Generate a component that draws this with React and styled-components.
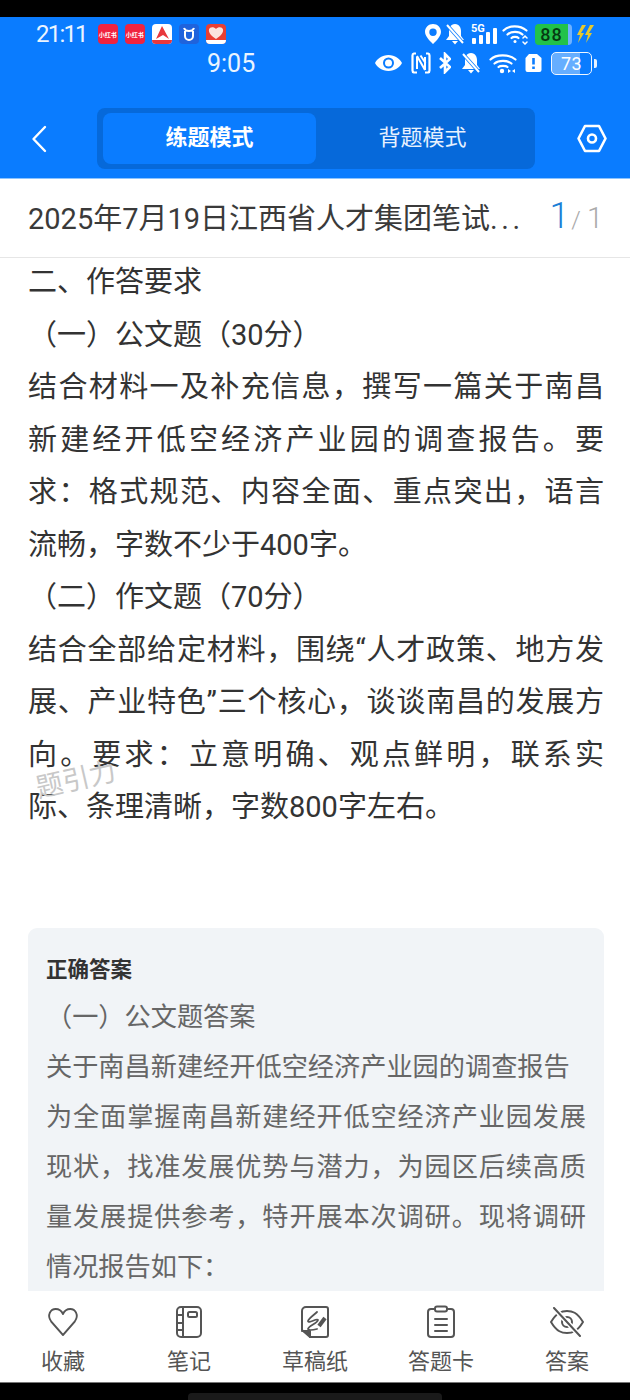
import React from "react";
import styled, { createGlobalStyle } from "styled-components";

const Global = createGlobalStyle`
  html, body { margin: 0; padding: 0; background: #000; }
  * { box-sizing: border-box; }
`;
const FONT = `Roboto, "Noto Sans CJK SC", sans-serif`;
const Page = styled.div`
  width: 630px; height: 1400px; display: flex; flex-direction: column;
  background: #fff; font-family: ${FONT}; overflow: hidden; position: relative;
`;
const TopBlack = styled.div`height: 17px; background: #000; flex: none;`;
const Header = styled.header`
  height: 162px; flex: none; background: #0a7cff; color: #fff;
  border-bottom: 1px solid #8cc4ff; display: flex; flex-direction: column;
`;
const StatusRow = styled.div`
  height: ${p => p.$h}px; display: flex; align-items: center; padding: ${p => p.$pad};
`;
const Clock = styled.span`
  font-size: ${p => p.$size}px; line-height: 1; color: #eaf4ff; margin-right: ${p => p.$mr || 0}px; letter-spacing: ${p => p.$ls || 0}px;
`;
const AppIcon = styled.span`
  width: 20px; height: 20px; border-radius: 4px; flex: none; margin-right: 7px;
  background: ${p => p.$bg}; color: ${p => p.$fg || "#fff"}; font-size: 6px; font-weight: 700;
  display: flex; align-items: center; justify-content: center; overflow: hidden; white-space: nowrap;
`;
const Spacer = styled.div`flex: 1;`;
const IconSlot = styled.span`display: flex; flex: none; margin-left: ${p => p.$ml || 0}px;`;
const Battery88 = styled.span`
  width: 37px; height: 21px; margin-left: 6px; flex: none; border-radius: 4px;
  background: linear-gradient(90deg, #22c24a 0 88%, #6fb2ff 88%); color: #063b12;
  font-size: 18px; font-weight: 500; display: flex; align-items: center; justify-content: center; letter-spacing: 1px; padding-right: 4px;
`;
const Battery73 = styled.span`
  width: 41px; height: 23px; flex: none; border-radius: 5px; border: 1.5px solid #eef6ff;
  background: linear-gradient(90deg, #66aeff 0 73%, transparent 73%);
  font-size: 18px; color: #fff; display: flex; align-items: center; justify-content: center; letter-spacing: .5px;
`;
const BatteryTip = styled.span`width: 3px; height: 9px; margin-left: 2px; margin-right: 0; border-radius: 0 2px 2px 0; background: #e6f1ff; flex: none;`;
const NavRow = styled.div`
  margin-top: 33px; display: flex; align-items: center; padding: 0 24px 0 31px;
`;
const Tabs = styled.div`
  width: 438px; height: 61px; margin-left: 50px; margin-right: 42px; flex: none; background: #0669da; border-radius: 8px;
  padding: 5px 0 5px 6px; display: flex;
`;
const Tab = styled.div`
  width: 213px; border-radius: 8px; display: flex; align-items: center; justify-content: center; padding-bottom: 7px;
  font-size: 22px; font-weight: ${p => p.$active ? 700 : 400}; background: ${p => p.$active ? "#0a7cff" : "transparent"};
  color: ${p => p.$active ? "#fff" : "#e6f1ff"};
`;
const TitleBar = styled.div`
  height: 79px; flex: none; border-bottom: 1px solid #e6e6e6; display: flex; align-items: center;
  padding: 0 27px 0 28px; justify-content: space-between;
`;
const Title = styled.div`font-size: 29px; font-weight: 400; color: #3a3a3a; white-space: nowrap; position: relative; top: -2px;`;
const TitleDots = styled.span`letter-spacing: 3.5px;`;
const Counter = styled.div`font-size: 29px; font-weight: 300; color: #aaa; white-space: nowrap; display: flex; align-items: baseline; position: relative; top: -2px;`;
const CounterNow = styled.span`font-size: 36px; font-weight: 300; color: #1c7fd6; margin-right: 2px;`;
const CounterSlash = styled.span`font-size: 24px; margin-right: 6px;`;
const Content = styled.main`flex: 1; overflow: hidden; position: relative; padding: 0 26px 0 28px;`;
const Question = styled.div`margin-top: -2px;`;
const Para = styled.p`
  margin: 0; font-size: 29px; line-height: 52.5px; color: #333; text-align: justify; width: 576px;
`;
const Watermark = styled.div`
  position: absolute; left: 35px; top: 500px; font-size: 27px; color: #c8c8c8; transform: rotate(-13deg); white-space: nowrap;
`;
const Answer = styled.section`
  margin-top: 94px; width: 576px; background: #f1f4f7; border-radius: 9px 9px 0 0; padding: 27px 18px 0 18px; height: 420px;
`;
const AnswerLabel = styled.div`font-size: 21.5px; font-weight: 700; color: #333; line-height: 30px; margin-bottom: 7px;`;
const AnswerText = styled.p`
  margin: 0; font-size: 26.2px; line-height: 50px; color: #666; text-align: justify;
`;
const BottomNav = styled.nav`
  height: 91px; flex: none; background: #fff; display: grid; grid-template-columns: repeat(5, 126px);
`;
const NavItem = styled.div`
  display: flex; flex-direction: column; align-items: center; padding-top: 14px;
`;
const NavIconBox = styled.div`height: 34px; display: flex; align-items: center; justify-content: center;`;
const NavLabel = styled.div`font-size: 22px; color: #555; line-height: 30px; margin-top: 8px;`;
const BottomBlack = styled.div`
  height: 18px; flex: none; background: #000; border-top: 1px solid #777; display: flex; justify-content: center; padding-top: 10px;
`;
const HomeBar = styled.div`width: 254px; height: 7px; border-radius: 4px 4px 0 0; background: #1a1a1a;`;

const W = "#fff";
const NavSvg = ({ w = 36, h = 36, children }) => (
  <svg width={w} height={h} viewBox={`0 0 ${w} ${h}`} fill="none" stroke="#555" strokeWidth="2" strokeLinecap="round" strokeLinejoin="round">{children}</svg>
);

export default function App() {
  return (
    <Page>
      <Global />
      <TopBlack />
      <Header>
        <StatusRow $h={34} $pad="0 35px 0 36px">
          <Clock $size={24} $mr={11} $ls={-1.8}>21:11</Clock>
          <AppIcon $bg="#f0233f">小红书</AppIcon>
          <AppIcon $bg="#f0233f">小红书</AppIcon>
          <AppIcon $bg="#fff"><svg width="20" height="20" viewBox="0 0 20 20"><path d="M10 2 L17 15 L11 11 L4 15 Z" fill="#e8383d"/><rect y="16" width="20" height="4" fill="#e8383d"/></svg></AppIcon>
          <AppIcon $bg="#1f63dc"><svg width="20" height="20" viewBox="0 0 20 20" fill="none" stroke="#fff" strokeWidth="2"><path d="M5 4 Q6 7 10 7 Q14 7 15 4 M6 7 V12 A4 4 0 0 0 14 12 V7"/></svg></AppIcon>
          <AppIcon $bg="#ea3f33"><svg width="20" height="20" viewBox="0 0 20 20"><path d="M10 15 C4 11 2.500 8 3 5.500 C3.800 2.500 8 2.500 10 5 C12 2.500 16.200 2.500 17 5.500 C17.500 8 16 11 10 15 Z" fill="#fbe3dc"/><rect y="16" width="20" height="4" fill="#fff"/></svg></AppIcon>
          <Spacer />
          <IconSlot>
            <svg width="18" height="22" viewBox="0 0 18 22"><path fillRule="evenodd" d="M9 1 C4.500 1 1 4.500 1 9 C1 14 9 21 9 21 C9 21 17 14 17 9 C17 4.500 13.500 1 9 1 Z M9 5.500 A3.700 3.700 0 1 1 9 12.900 A3.700 3.700 0 1 1 9 5.500 Z" fill={W}/></svg>
          </IconSlot>
          <IconSlot $ml={3}>
            <svg width="20" height="22" viewBox="0 0 20 22"><path d="M10 1 C5.500 1 4 5 4 8 V13 L1 17 H19 L16 13 V8 C16 5 14.500 1 10 1 Z M7 18 H13 L10 21.500 Z" fill={W}/><path d="M2 2 L18 20" stroke="#0a7cff" strokeWidth="3.500"/><path d="M2 2 L18 20" stroke={W} strokeWidth="2"/></svg>
          </IconSlot>
          <IconSlot $ml={6}>
            <svg width="26" height="22" viewBox="0 0 26 22"><text x="0" y="9" fontSize="11" fontWeight="700" fill={W} fontFamily="Roboto">5G</text><rect x="1" y="15" width="4" height="6" rx="1" fill={W}/><rect x="8" y="12" width="4" height="9" rx="1" fill={W}/><rect x="15" y="9" width="4" height="12" rx="1" fill={W}/><rect x="22" y="5" width="4" height="16" rx="1" fill={W}/></svg>
          </IconSlot>
          <IconSlot $ml={5}>
            <svg width="27" height="22" viewBox="0 0 27 22" fill="none" stroke={W} strokeWidth="2.200" strokeLinecap="round"><path d="M1.500 7.500 C7 2 18 2 24.500 7.500"/><path d="M5.500 11.500 C9 8 17 8 20.500 11.500"/><path d="M9.500 15 C11 13.500 15 13.500 16.500 15"/><circle cx="13" cy="18.500" r="1.500" fill={W} stroke="none"/><path d="M21 15 L23 13 L25 15 M21 19 L23 21 L25 19" strokeWidth="1.500"/></svg>
          </IconSlot>
          <Battery88>88</Battery88>
          <IconSlot $ml={4}>
            <svg width="19" height="20" viewBox="0 0 19 20"><path d="M6 1 H10 L5 9 H8 L2 19 L4 11 H1 Z M14 1 H18 L13 9 H16 L10 19 L12 11 H9 Z" fill="#e8c92c"/></svg>
          </IconSlot>
        </StatusRow>
        <StatusRow $h={24} $pad="0 33px 0 207px">
          <Clock $size={25}>9:05</Clock>
          <Spacer />
          <IconSlot>
            <svg width="29" height="20" viewBox="0 0 29 20"><path fillRule="evenodd" d="M14.500 2 C8 2 3 6 1 10 C3 14 8 18 14.500 18 C21 18 26 14 28 10 C26 6 21 2 14.500 2 Z M14.500 4.500 A5.500 5.500 0 1 1 14.500 15.500 A5.500 5.500 0 1 1 14.500 4.500 Z" fill={W}/><circle cx="14.500" cy="10" r="3.500" fill={W}/></svg>
          </IconSlot>
          <IconSlot $ml={8}>
            <svg width="20" height="22" viewBox="0 0 20 22" fill="none" stroke={W} strokeWidth="2.200"><path d="M5 1.500 H3 A2 2 0 0 0 1.500 3.500 V18.500 A2 2 0 0 0 3 20.500 H6 M15 1.500 H17 A2 2 0 0 1 18.500 3.500 V18.500 A2 2 0 0 1 17 20.500 H14"/><path d="M6 4.500 V17 M6 4 L14 18 M9.500 3.500 L14.500 11 M14 5 V18" strokeWidth="2"/></svg>
          </IconSlot>
          <IconSlot $ml={8}>
            <svg width="12" height="22" viewBox="0 0 12 22" fill="none" stroke={W} strokeWidth="2.600"><path d="M1 6 L11 15 L6 20 V2 L11 7 L1 16"/></svg>
          </IconSlot>
          <IconSlot $ml={10}>
            <svg width="20" height="22" viewBox="0 0 20 22"><path d="M10 1 C5.500 1 4 5 4 8 V13 L1 17 H19 L16 13 V8 C16 5 14.500 1 10 1 Z M7 18 H13 L10 21.500 Z" fill={W}/><path d="M2 2 L18 20" stroke="#0a7cff" strokeWidth="3.500"/><path d="M2 2 L18 20" stroke={W} strokeWidth="2"/></svg>
          </IconSlot>
          <IconSlot $ml={8}>
            <svg width="28" height="22" viewBox="0 0 28 22" fill="none" stroke={W} strokeWidth="2.200" strokeLinecap="round"><path d="M1.500 7.500 C7 2 20 2 26.500 7.500"/><path d="M5.500 11.500 C10 8 18 8 22.500 11.500"/><path d="M9.500 15 C11 13.500 17 13.500 18.500 15"/><circle cx="13" cy="19" r="2.200" fill={W} stroke="none"/><path d="M19 17 L22 19 L19 21 Z M26 17 L23 19 L26 21 Z" fill={W} stroke="none"/></svg>
          </IconSlot>
          <IconSlot $ml={8}>
            <svg width="17" height="22" viewBox="0 0 17 22"><path fillRule="evenodd" d="M4 2 H12 L16.500 6 V18 A2 2 0 0 1 14.500 20 H2.500 A2 2 0 0 1 .5 18 V6 Z M7.200 6 V12.500 H9.800 V6 Z M7.200 14.500 V17 H9.800 V14.500 Z" fill={W}/></svg>
          </IconSlot>
          <IconSlot $ml={9}><Battery73>73</Battery73></IconSlot>
          <BatteryTip />
        </StatusRow>
        <NavRow>
          <svg width="16" height="28" viewBox="0 0 16 28" fill="none" stroke={W} strokeWidth="2.400" strokeLinecap="round" strokeLinejoin="round" style={{ flex: "none" }}><path d="M14 2 L2.500 14 L14 26"/></svg>
          <Tabs>
            <Tab $active>练题模式</Tab>
            <Tab>背题模式</Tab>
          </Tabs>
          <svg width="30" height="29" viewBox="0 0 30 29" fill="none" stroke={W} strokeWidth="2.600" strokeLinejoin="round" style={{ flex: "none" }}><path d="M8 2 H22 L28.500 14.500 L22 27 H8 L1.500 14.500 Z"/><circle cx="15" cy="14.500" r="4"/></svg>
        </NavRow>
      </Header>
      <TitleBar>
        <Title>2025年7月19日江西省人才集团笔试<TitleDots>...</TitleDots></Title>
        <Counter><CounterNow>1</CounterNow><CounterSlash>/</CounterSlash>1</Counter>
      </TitleBar>
      <Content>
        <Question>
          <Para>二、作答要求</Para>
          <Para>（一）公文题（30分）</Para>
          <Para>结合材料一及补充信息，撰写一篇关于南昌新建经开低空经济产业园的调查报告。要求：格式规范、内容全面、重点突出，语言流畅，字数不少于400字。</Para>
          <Para>（二）作文题（70分）</Para>
          <Para>结合全部给定材料，围绕“人才政策、地方发展、产业特色”三个核心，谈谈南昌的发展方向。要求：立意明确、观点鲜明，联系实际、条理清晰，字数800字左右。</Para>
        </Question>
        <Watermark>题引力</Watermark>
        <Answer>
          <AnswerLabel>正确答案</AnswerLabel>
          <AnswerText>（一）公文题答案</AnswerText>
          <AnswerText>关于南昌新建经开低空经济产业园的调查报告</AnswerText>
          <AnswerText>为全面掌握南昌新建经开低空经济产业园发展现状，找准发展优势与潜力，为园区后续高质量发展提供参考，特开展本次调研。现将调研情况报告如下：</AnswerText>
        </Answer>
      </Content>
      <BottomNav>
        <NavItem><NavIconBox><NavSvg w={34} h={30}><path d="M17 28 L4 14.500 C-1 8 3.500 2 9 2 C12.500 2 15.500 4 17 7 C18.500 4 21.500 2 25 2 C30.500 2 35 8 30 14.500 Z" transform="translate(1.500 0) scale(.91 1)"/></NavSvg></NavIconBox><NavLabel>收藏</NavLabel></NavItem>
        <NavItem><NavIconBox><NavSvg w={28} h={34}><rect x="2" y="2" width="24" height="30" rx="4"/><path d="M8 2 V32 M2 10 H8 M2 18 H8 M2 25 H8"/><rect x="13" y="7" width="9" height="5" rx="1.500"/></NavSvg></NavIconBox><NavLabel>笔记</NavLabel></NavItem>
        <NavItem><NavIconBox><NavSvg w={30} h={34}><path d="M6 2 H26 A2 2 0 0 1 28 4 V30 A2 2 0 0 1 26 32 H10 L2 25 V6 A4 4 0 0 1 6 2 Z"/><path d="M10 32 V26 H2" fill="#555"/><path d="M17 7 C14 10 9 13 8 16 C8 19 17 13 18 15 C18 18 8 21 8 24 C9 26 13 25 17 24" strokeWidth="1.800"/><path d="M25 13 L19 21" strokeWidth="4" strokeLinecap="butt"/></NavSvg></NavIconBox><NavLabel>草稿纸</NavLabel></NavItem>
        <NavItem><NavIconBox><NavSvg w={30} h={34}><path d="M8 4 H5 A3 3 0 0 0 2 7 V29 A3 3 0 0 0 5 32 H25 A3 3 0 0 0 28 29 V7 A3 3 0 0 0 25 4 H22"/><rect x="9" y="1.500" width="12" height="5" rx="2"/><path d="M9 14 H21 M9 20 H21 M9 26 H21"/></NavSvg></NavIconBox><NavLabel>答题卡</NavLabel></NavItem>
        <NavItem><NavIconBox><NavSvg w={36} h={30}><path d="M2 15 C8 5 13 4 18 4 C23 4 28 5 34 15 C28 25 23 26 18 26 C13 26 8 25 2 15 Z"/><circle cx="18" cy="15" r="5"/><path d="M5 1 L31 29" stroke="#fff" strokeWidth="5"/><path d="M5 1 L31 29"/></NavSvg></NavIconBox><NavLabel>答案</NavLabel></NavItem>
      </BottomNav>
      <BottomBlack><HomeBar /></BottomBlack>
    </Page>
  );
}
